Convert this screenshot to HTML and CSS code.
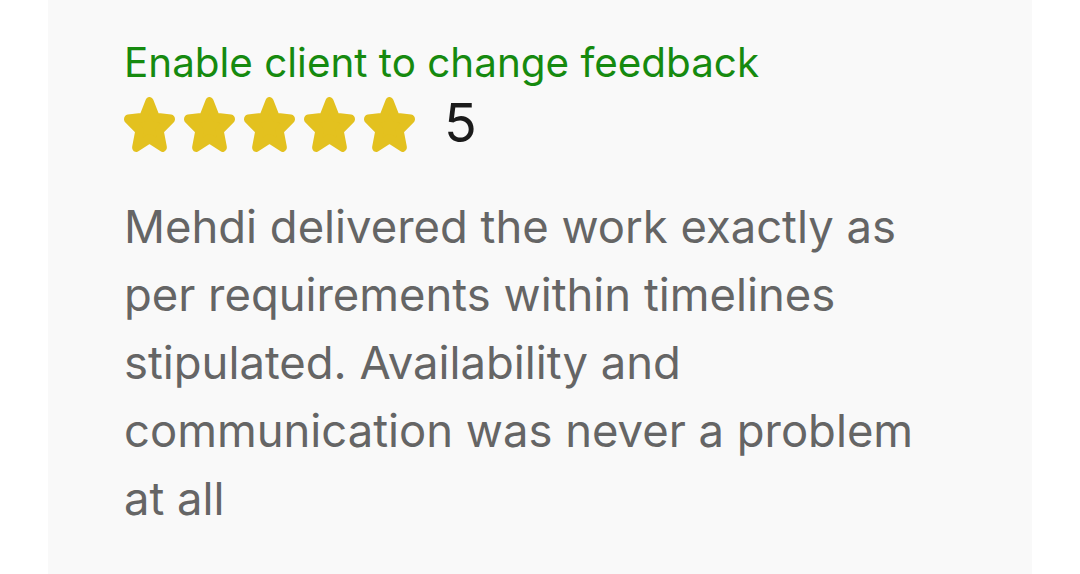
FILE: index.html
```html
<!DOCTYPE html>
<html>
<head>
<meta charset="utf-8">
<link rel="stylesheet" href="styles.css">
</head>
<body>
<div class="page">
  <div class="card">
    <div class="title">Enable client to change feedback</div>
    <div class="rating">
      <div class="stars">
        <svg class="star" viewBox="1.55 1.6 20.9 20.04" preserveAspectRatio="none"><path d="M12 3.3L14.53 9.02 20.75 9.66 16.09 13.83 17.41 19.94 12 16.8 6.59 19.94 7.91 13.83 3.25 9.66 9.47 9.02Z"/></svg>
        <svg class="star" viewBox="1.55 1.6 20.9 20.04" preserveAspectRatio="none"><path d="M12 3.3L14.53 9.02 20.75 9.66 16.09 13.83 17.41 19.94 12 16.8 6.59 19.94 7.91 13.83 3.25 9.66 9.47 9.02Z"/></svg>
        <svg class="star" viewBox="1.55 1.6 20.9 20.04" preserveAspectRatio="none"><path d="M12 3.3L14.53 9.02 20.75 9.66 16.09 13.83 17.41 19.94 12 16.8 6.59 19.94 7.91 13.83 3.25 9.66 9.47 9.02Z"/></svg>
        <svg class="star" viewBox="1.55 1.6 20.9 20.04" preserveAspectRatio="none"><path d="M12 3.3L14.53 9.02 20.75 9.66 16.09 13.83 17.41 19.94 12 16.8 6.59 19.94 7.91 13.83 3.25 9.66 9.47 9.02Z"/></svg>
        <svg class="star" viewBox="1.55 1.6 20.9 20.04" preserveAspectRatio="none"><path d="M12 3.3L14.53 9.02 20.75 9.66 16.09 13.83 17.41 19.94 12 16.8 6.59 19.94 7.91 13.83 3.25 9.66 9.47 9.02Z"/></svg>
      </div>
      <span class="score">5</span>
    </div>
    <p class="comment">Mehdi delivered the work exactly as<br>per requirements within timelines<br>stipulated. Availability and<br>communication was never a problem<br>at all</p>
  </div>
</div>
</body>
</html>
```

FILE: styles.css
```css
html, body {
  margin: 0;
  padding: 0;
  background: #ffffff;
  height: 574px;
  overflow: hidden;
}
.page {
  padding: 0 48px;
}
.card {
  background: #f9f9f9;
  height: 574px;
  padding: 41px 76px 0;
  box-sizing: border-box;
  font-family: Inter, "Liberation Sans", Arial, sans-serif;
}
.title {
  color: #168a0f;
  font-size: 40.4px;
  line-height: 44px;
}
.rating {
  display: flex;
  align-items: flex-start;
  margin-top: 12px;
}
.stars {
  display: flex;
  gap: 9px;
}
.star {
  width: 51px;
  height: 55px;
  fill: #e3c11f;
  stroke: #e3c11f;
  stroke-width: 3.4;
  stroke-linejoin: round;
  display: block;
}
.score {
  margin-left: 29px;
  font-size: 54px;
  line-height: 51px;
  color: #1b1b1b;
}
.comment {
  margin: 41px 0 0;
  color: #656565;
  font-size: 45.4px;
  line-height: 68px;
}
```
